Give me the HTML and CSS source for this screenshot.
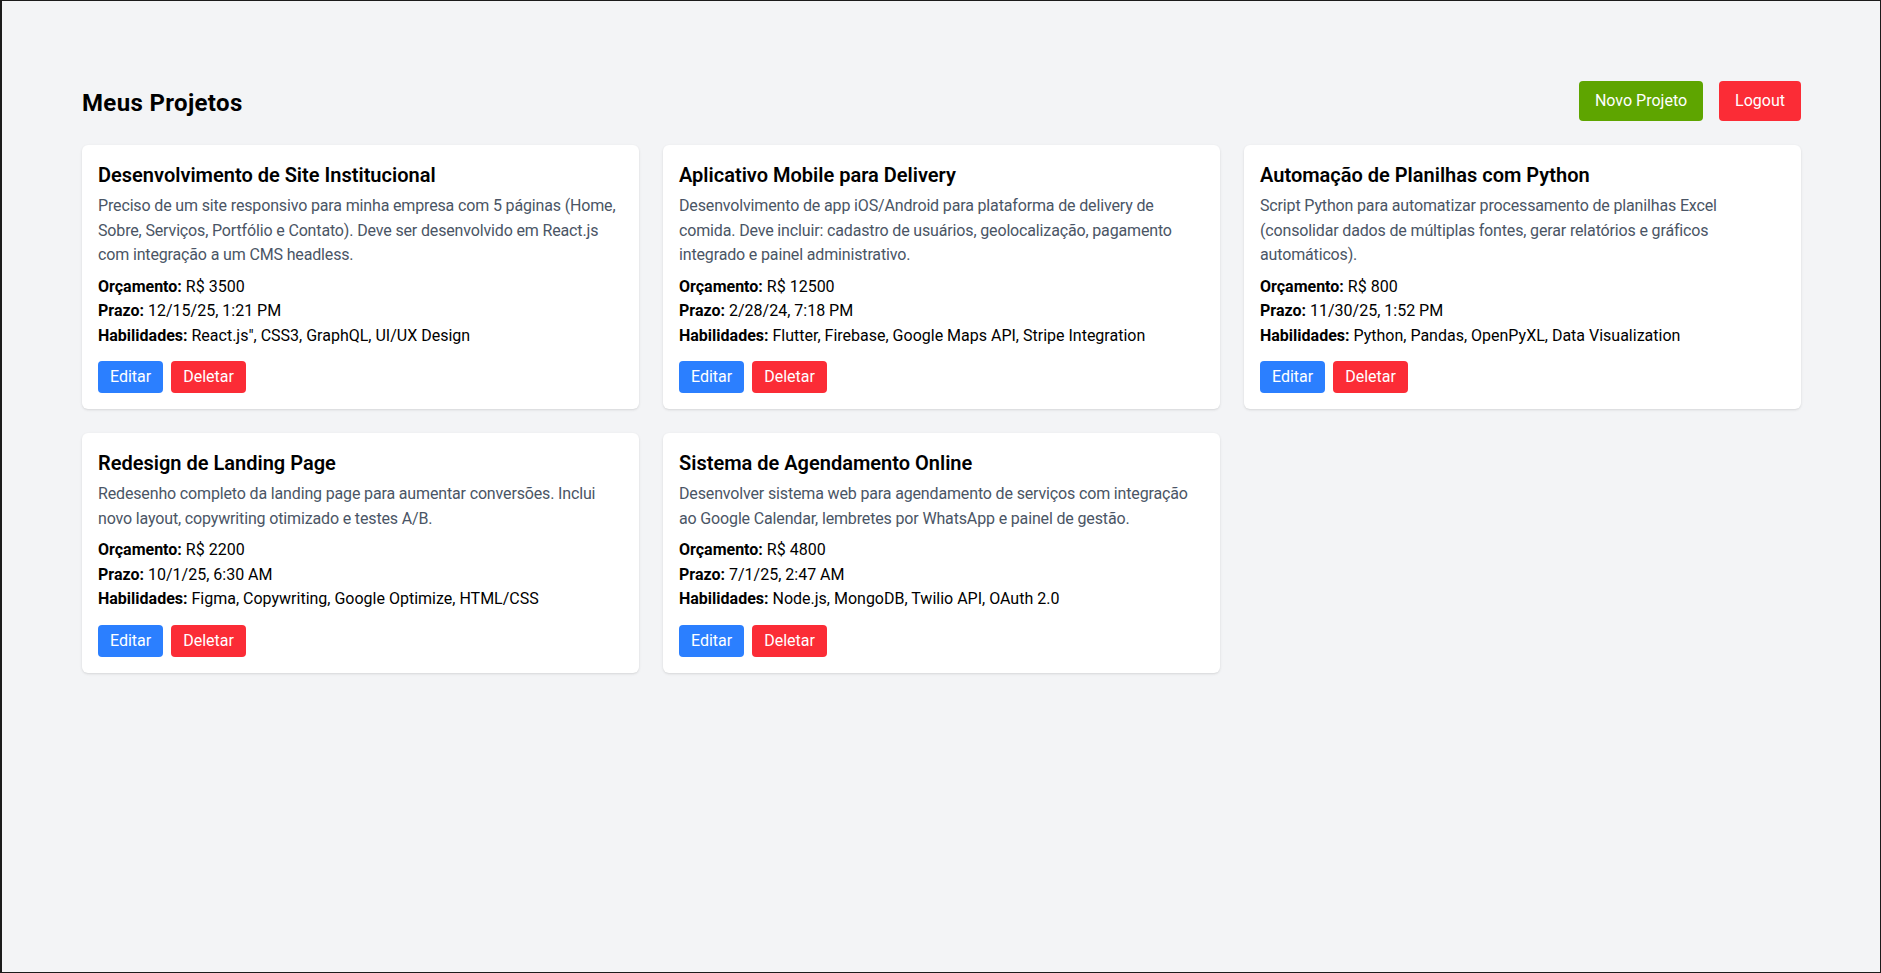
FILE: index.html
```html
<!DOCTYPE html>
<html lang="pt-BR">
<head>
<meta charset="utf-8">
<title>Meus Projetos</title>
<link rel="stylesheet" href="styles.css">
</head>
<body>
<div class="page">
  <header class="header">
    <h1 class="page-title">Meus Projetos</h1>
    <div class="header-actions">
      <button class="btn btn-lg btn-green">Novo Projeto</button>
      <button class="btn btn-lg btn-red">Logout</button>
    </div>
  </header>
  <main class="grid">
    <article class="card">
      <h2 class="card-title">Desenvolvimento de Site Institucional</h2>
      <p class="card-desc">Preciso de um site responsivo para minha empresa com 5 páginas (Home,<br>Sobre, Serviços, Portfólio e Contato). Deve ser desenvolvido em React.js<br>com integração a um CMS headless.</p>
      <div class="card-info">
        <p><strong>Orçamento:</strong> R$ 3500</p>
        <p><strong>Prazo:</strong> 12/15/25, 1:21 PM</p>
        <p><strong>Habilidades:</strong> React.js", CSS3, GraphQL, UI/UX Design</p>
      </div>
      <div class="card-actions">
        <button class="btn btn-sm btn-blue">Editar</button>
        <button class="btn btn-sm btn-red">Deletar</button>
      </div>
    </article>
    <article class="card">
      <h2 class="card-title">Aplicativo Mobile para Delivery</h2>
      <p class="card-desc">Desenvolvimento de app iOS/Android para plataforma de delivery de<br>comida. Deve incluir: cadastro de usuários, geolocalização, pagamento<br>integrado e painel administrativo.</p>
      <div class="card-info">
        <p><strong>Orçamento:</strong> R$ 12500</p>
        <p><strong>Prazo:</strong> 2/28/24, 7:18 PM</p>
        <p><strong>Habilidades:</strong> Flutter, Firebase, Google Maps API, Stripe Integration</p>
      </div>
      <div class="card-actions">
        <button class="btn btn-sm btn-blue">Editar</button>
        <button class="btn btn-sm btn-red">Deletar</button>
      </div>
    </article>
    <article class="card">
      <h2 class="card-title">Automação de Planilhas com Python</h2>
      <p class="card-desc">Script Python para automatizar processamento de planilhas Excel<br>(consolidar dados de múltiplas fontes, gerar relatórios e gráficos<br>automáticos).</p>
      <div class="card-info">
        <p><strong>Orçamento:</strong> R$ 800</p>
        <p><strong>Prazo:</strong> 11/30/25, 1:52 PM</p>
        <p><strong>Habilidades:</strong> Python, Pandas, OpenPyXL, Data Visualization</p>
      </div>
      <div class="card-actions">
        <button class="btn btn-sm btn-blue">Editar</button>
        <button class="btn btn-sm btn-red">Deletar</button>
      </div>
    </article>
    <article class="card">
      <h2 class="card-title">Redesign de Landing Page</h2>
      <p class="card-desc">Redesenho completo da landing page para aumentar conversões. Inclui<br>novo layout, copywriting otimizado e testes A/B.</p>
      <div class="card-info">
        <p><strong>Orçamento:</strong> R$ 2200</p>
        <p><strong>Prazo:</strong> 10/1/25, 6:30 AM</p>
        <p><strong>Habilidades:</strong> Figma, Copywriting, Google Optimize, HTML/CSS</p>
      </div>
      <div class="card-actions">
        <button class="btn btn-sm btn-blue">Editar</button>
        <button class="btn btn-sm btn-red">Deletar</button>
      </div>
    </article>
    <article class="card">
      <h2 class="card-title">Sistema de Agendamento Online</h2>
      <p class="card-desc">Desenvolver sistema web para agendamento de serviços com integração<br>ao Google Calendar, lembretes por WhatsApp e painel de gestão.</p>
      <div class="card-info">
        <p><strong>Orçamento:</strong> R$ 4800</p>
        <p><strong>Prazo:</strong> 7/1/25, 2:47 AM</p>
        <p><strong>Habilidades:</strong> Node.js, MongoDB, Twilio API, OAuth 2.0</p>
      </div>
      <div class="card-actions">
        <button class="btn btn-sm btn-blue">Editar</button>
        <button class="btn btn-sm btn-red">Deletar</button>
      </div>
    </article>
  </main>
</div>
</body>
</html>
```

FILE: styles.css
```css
* {
  box-sizing: border-box;
}

html, body {
  margin: 0;
  padding: 0;
}

body {
  font-family: "Segoe UI", Roboto, "Liberation Sans", sans-serif;
  font-size: 16px;
  line-height: 24.5px;
  color: #000;
  background: #f3f4f6;
}

.page {
  min-height: 100vh;
  background: #f3f4f6;
  border-top: 1px solid #1b1b1b;
  border-bottom: 1px solid #1b1b1b;
  border-left: 2px solid #1b1b1b;
  border-right: 1px solid #1b1b1b;
  padding: 80px 79px 80px 80px;
}

.header {
  display: flex;
  align-items: center;
  justify-content: space-between;
  margin-bottom: 24px;
}

.page-title {
  margin: 0;
  padding-top: 4px;
  font-size: 24px;
  line-height: 32px;
  font-weight: 700;
  letter-spacing: 0.35px;
  color: #000;
}

.header-actions {
  display: flex;
  gap: 16px;
}

.btn {
  font-family: inherit;
  font-size: 16px;
  line-height: 24px;
  color: #fff;
  border: 0;
  border-radius: 4px;
  cursor: pointer;
}

.btn-lg {
  padding: 8px 16px;
}

.btn-sm {
  padding: 4px 12px;
}

.btn-green { background: #5ea500; }
.btn-red { background: #fb2c36; }
.btn-blue { background: #2b7fff; }

.grid {
  display: grid;
  grid-template-columns: repeat(3, 1fr);
  gap: 24px;
  align-items: start;
}

.card {
  background: #fff;
  border-radius: 6px;
  padding: 18px 16px 16px;
  box-shadow: 0 1px 3px 0 rgba(0, 0, 0, 0.1), 0 1px 2px -1px rgba(0, 0, 0, 0.1);
}

.card-title {
  margin: 0;
  font-size: 20px;
  line-height: 25px;
  font-weight: 600;
  color: #000;
}

.card-desc {
  margin: 6px 0 0;
  color: #4a5565;
  letter-spacing: -0.15px;
  white-space: nowrap;
}

.card-info {
  margin-top: 7px;
}

.card-info p {
  margin: 0;
}

.card-info strong {
  font-weight: 700;
}

.card-actions {
  display: flex;
  gap: 8px;
  margin-top: 13px;
}
```
